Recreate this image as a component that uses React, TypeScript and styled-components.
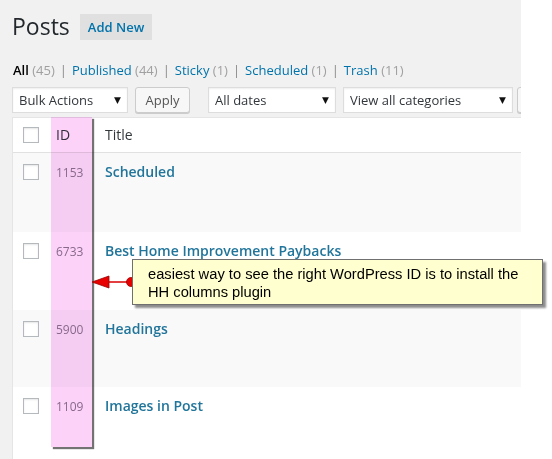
import React from "react";
import styled, { createGlobalStyle } from "styled-components";

const Global = createGlobalStyle`
  html, body { margin: 0; padding: 0; background: #ffffff; }
  body { font-family: "Open Sans", "Liberation Sans", sans-serif; color: #444; }
  * { box-sizing: border-box; }
`;

const Page = styled.div`
  position: relative;
  width: 552px;
  height: 459px;
  overflow: hidden;
  background: #ffffff;
`;

const Main = styled.div`
  width: 521px;
  height: 459px;
  background: #f1f1f1;
  padding-left: 12px;
  overflow: hidden;
  display: flex;
  flex-direction: column;
`;

const TitleRow = styled.div`
  display: flex;
  align-items: flex-start;
  padding-top: 12px;
`;

const Heading = styled.h1`
  margin: 0 10px 0 0;
  font-size: 23px;
  line-height: 29px;
  font-weight: 400;
  color: #23282d;
`;

const AddNew = styled.a`
  margin-top: 2px;
  height: 26px;
  line-height: 26px;
  padding: 0 8px;
  background: #e0e0e0;
  color: #0073aa;
  font-size: 13px;
  font-weight: 600;
  text-decoration: none;
`;

const Views = styled.ul`
  display: flex;
  list-style: none;
  margin: 19px 0 0 1px;
  padding: 0;
  font-size: 13px;
  line-height: 20px;
  color: #666;
`;

const ViewItem = styled.li`
  white-space: pre;
`;

const ViewLink = styled.a<{ $current?: boolean }>`
  color: ${(p) => (p.$current ? "#000" : "#0073aa")};
  font-weight: ${(p) => (p.$current ? 600 : 400)};
  text-decoration: none;
`;

const Count = styled.span`
  color: #a0a0a0;
  font-weight: 400;
`;

const Sep = styled.span`
  color: #888;
  padding: 0 5px;
`;

const Filters = styled.div`
  display: flex;
  align-items: center;
  margin-top: 7px;
  height: 26px;
`;

const Select = styled.div<{ $w: number; $gap: number }>`
  flex: none;
  width: ${(p) => p.$w}px;
  height: 26px;
  margin-right: ${(p) => p.$gap}px;
  background: #fff;
  border: 1px solid #ddd;
  box-shadow: inset 0 1px 2px rgba(0, 0, 0, 0.07);
  display: flex;
  align-items: center;
  justify-content: space-between;
  padding: 0 6px 0 6px;
  font-size: 13px;
  color: #32373c;
`;

const Caret = styled.span`
  font-size: 9px;
  color: #111;
  font-family: "DejaVu Sans", sans-serif;
`;

const Button = styled.div<{ $w: number; $gap: number }>`
  flex: none;
  width: ${(p) => p.$w}px;
  height: 26px;
  margin-right: ${(p) => p.$gap}px;
  background: #f7f7f7;
  border: 1px solid #ccc;
  border-radius: 3px;
  box-shadow: 0 1px 0 #ccc;
  display: flex;
  align-items: center;
  justify-content: center;
  font-size: 13px;
  color: #555;
`;

const Table = styled.div`
  margin-top: 4px;
  width: 509px;
  flex: 1;
  background: #fff;
  border-left: 1px solid #e5e5e5;
  border-top: 1px solid #e5e5e5;
`;

const HeadRow = styled.div`
  display: grid;
  grid-template-columns: 38px 54px 1fr;
  height: 35px;
  border-bottom: 1px solid #e1e1e1;
  background: #fff;
`;

const Row = styled.div<{ $alt: boolean; $h: number }>`
  display: grid;
  grid-template-columns: 38px 54px 1fr;
  height: ${(p) => p.$h}px;
  background: ${(p) => (p.$alt ? "#f9f9f9" : "#fff")};
`;

const CheckCell = styled.div<{ $top: number }>`
  padding: ${(p) => p.$top}px 0 0 10px;
`;

const Check = styled.div`
  width: 16px;
  height: 16px;
  background: #fff;
  border: 1px solid #b4b9be;
  box-shadow: inset 0 1px 2px rgba(0, 0, 0, 0.1);
`;

const HeadCell = styled.div<{ $pad: number }>`
  padding: 7px 0 0 ${(p) => p.$pad}px;
  font-size: 14px;
  line-height: 20px;
  color: #32373c;
`;

const IdCell = styled.div`
  padding: 10px 0 0 5px;
  font-size: 12px;
  line-height: 19px;
  color: #8a8090;
`;

const TitleCell = styled.div`
  padding: 9px 0 0 0;
  font-size: 14px;
  line-height: 20px;
  font-weight: 600;
  color: #21759b;
`;

const IdHighlight = styled.div`
  position: absolute;
  left: 51px;
  top: 117px;
  width: 41px;
  height: 330px;
  background: #fcd2f8;
  mix-blend-mode: multiply;
  box-shadow: 2px 2px 1px rgba(0, 0, 0, 0.55);
`;

const Pointer = styled.svg`
  position: absolute;
  left: 88px;
  top: 272px;
`;

const Callout = styled.div`
  position: absolute;
  left: 132px;
  top: 259px;
  width: 411px;
  height: 46px;
  padding: 5px 0 0 15px;
  background: #ffffcf;
  border: 1px solid #707070;
  box-shadow: 3px 3px 2px rgba(0, 0, 0, 0.45);
  font-family: "Liberation Sans", Arial, sans-serif;
  font-size: 14.7px;
  line-height: 18px;
  color: #000;
`;

const views = [
  { label: "All", count: 45, current: true },
  { label: "Published", count: 44 },
  { label: "Sticky", count: 1 },
  { label: "Scheduled", count: 1 },
  { label: "Trash", count: 11 },
];

const posts = [
  { id: 1153, title: "Scheduled", h: 79 },
  { id: 6733, title: "Best Home Improvement Paybacks", h: 78 },
  { id: 5900, title: "Headings", h: 77 },
  { id: 1109, title: "Images in Post", h: 78 },
];

export default function App() {
  return (
    <Page>
      <Global />
      <Main>
        <TitleRow>
          <Heading>Posts</Heading>
          <AddNew>Add New</AddNew>
        </TitleRow>
        <Views>
          {views.map((v, i) => (
            <ViewItem key={v.label}>
              <ViewLink $current={v.current}>
                {v.label} <Count>({v.count})</Count>
              </ViewLink>
              {i < views.length - 1 && <Sep>|</Sep>}
            </ViewItem>
          ))}
        </Views>
        <Filters>
          <Select $w={116} $gap={7}>
            Bulk Actions <Caret>▼</Caret>
          </Select>
          <Button $w={55} $gap={18}>Apply</Button>
          <Select $w={128} $gap={7}>
            All dates <Caret>▼</Caret>
          </Select>
          <Select $w={170} $gap={4}>
            View all categories <Caret>▼</Caret>
          </Select>
          <Button $w={55} $gap={0} />
        </Filters>
        <Table>
          <HeadRow>
            <CheckCell $top={9}>
              <Check />
            </CheckCell>
            <HeadCell $pad={5}>ID</HeadCell>
            <HeadCell $pad={0}>Title</HeadCell>
          </HeadRow>
          {posts.map((p, i) => (
            <Row key={p.id} $alt={i % 2 === 0} $h={p.h}>
              <CheckCell $top={11}>
                <Check />
              </CheckCell>
              <IdCell>{p.id}</IdCell>
              <TitleCell>{p.title}</TitleCell>
            </Row>
          ))}
        </Table>
      </Main>
      <IdHighlight />
      <Pointer width="50" height="20" viewBox="0 0 50 20">
        <line x1="18" y1="10" x2="43" y2="10" stroke="#d80000" strokeWidth="1.5" />
        <polygon points="4,10 21,4 21,16" fill="#e80000" stroke="#9a0000" strokeWidth="0.8" />
        <circle cx="43" cy="10" r="4.5" fill="#e80000" stroke="#9a0000" strokeWidth="0.8" />
      </Pointer>
      <Callout>
        easiest way to see the right WordPress ID is to install the
        <br />
        HH columns plugin
      </Callout>
    </Page>
  );
}
